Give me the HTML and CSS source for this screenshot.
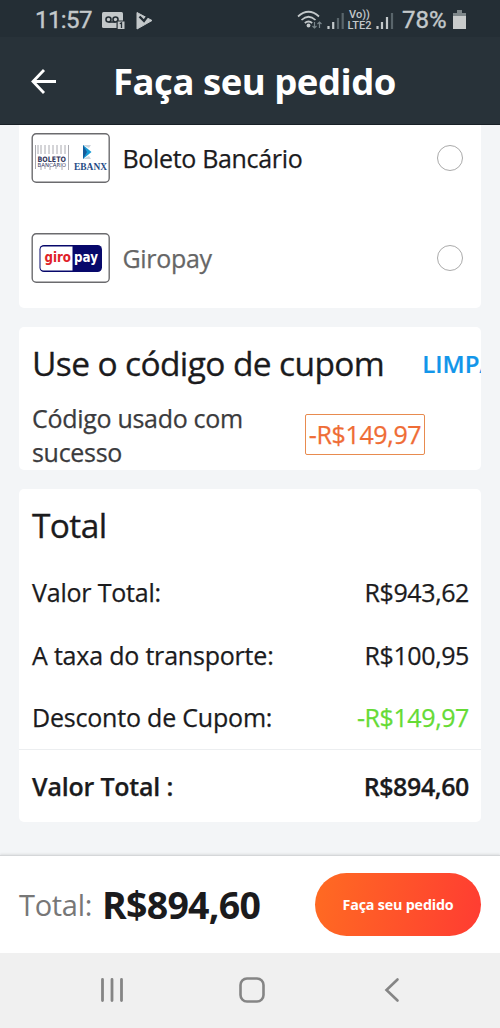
FILE: index.html
```html
<!DOCTYPE html>
<html lang="pt-BR">
<head>
<meta charset="utf-8">
<title>Faça seu pedido</title>
<link rel="stylesheet" href="styles.css">
</head>
<body>
<div class="screen">
  <div class="status">
    <span class="clock">11:57</span>
    <svg class="status-left" width="54" height="22" viewBox="0 0 54 22" fill="#c3c8ca">
      <rect x="0" y="3" width="21" height="16" rx="1.5"/>
      <g fill="none" stroke="#242e35" stroke-width="1.6"><circle cx="6.500" cy="10.500" r="2.500"/><circle cx="13.500" cy="10.500" r="2.500"/><path d="M6.500 13h7"/></g>
      <path d="M14.500 11.500h6.500v8h-6.500z" fill="#242e35"/><rect x="15.700" y="12.500" width="6.800" height="7.500"/>
      <path d="M17.800 14.800l1.700-.9v5" fill="none" stroke="#242e35" stroke-width="1.300"/>
      <path d="M35 3.500L50 11.500 35 20z" stroke="#c3c8ca" stroke-linejoin="round"/>
      <path d="M37.500 7.500l4.500 4.500 6.500-9" fill="none" stroke="#242e35" stroke-width="2.400"/>
    </svg>
    <div class="status-right">
      <svg width="48" height="22" viewBox="0 0 48 22">
        <g transform="translate(3 0)"><g fill="none" stroke="#c3c8ca" stroke-width="1.700"><path d="M0 7.500Q10.500-2 21 7.500M3.500 11Q10.500 4.500 17.500 11M6.800 14Q10.500 11 14.200 14"/></g>
        <circle cx="10.500" cy="16.500" r="1.900" fill="#c3c8ca"/>
        <path d="M16.500 13v6m-2-2l2 2 2-2M21.500 19v-6m-2 2l2-2 2 2" fill="none" stroke="#79858a" stroke-width="1.200"/></g>
        <path d="M33.500 17v3M38.200 13v7" stroke="#c3c8ca" stroke-width="2.200"/><path d="M43 9v11M47.700 4v16" stroke="#59656b" stroke-width="2.200"/>
      </svg>
      <span class="lte"><span>Vo))</span><span>LTE2</span></span>
      <svg width="18" height="22" viewBox="0 0 18 22"><path d="M1.500 17v3M6 13v7M11 8v12" stroke="#c3c8ca" stroke-width="2.200"/><path d="M16 4v16" stroke="#59656b" stroke-width="2.200"/></svg>
      <span class="percent">78%</span>
      <svg class="battery" width="13" height="20" viewBox="0 0 13 20"><path d="M4 0h5v3h4v4H0V3h4z" fill="#7e878a"/><path d="M0 6h13v13H0z" fill="#c9cccc"/></svg>
    </div>
  </div>
  <header class="header">
    <svg width="28" height="28" viewBox="0 0 28 28" fill="none" stroke="#fff" stroke-width="2.800"><path d="M14 3L3 14.500l11 11.500M3 14.500h23"/></svg>
    <h1 class="title">Faça seu pedido</h1>
  </header>
  <main class="content">
    <section class="card methods">
      <div class="method">
        <svg class="logo" width="80" height="52" viewBox="0 0 80 52">
          <rect x="1.200" y="1.800" width="77" height="48.500" rx="4" fill="#fff" stroke="#6b6b6e" stroke-width="1.400"/>
          <path d="M4.500 13v24M7 13v9M10 13v9M14 13v9M18 13v9M22 13v9M26 13v9M30 13v9M34 13v9M37.500 13v25M10 35v3M14 35v2M19 35v3M25 35v2M31 35v3" stroke="#aaaab0"/>
          <text class="boleto" x="6.500" y="29.500" textLength="28.500" lengthAdjust="spacingAndGlyphs">BOLETO</text><text class="bancario" x="6.500" y="35" textLength="28.500" lengthAdjust="spacingAndGlyphs">BANCÁRIO</text>
          <path d="M52 13h8l-2 3zM52 27h8l-2-3z" fill="#ccd4dc"/><path d="M52 13l8.500 7-8.500 7z" fill="#169bd5"/><path d="M52 13l4 7-4 7z" fill="#155a9a"/>
          <text class="ebanx" x="43" y="38" textLength="33" lengthAdjust="spacingAndGlyphs">EBANX</text>
        </svg>
        <span class="method-name">Boleto Bancário</span><i class="radio"></i>
      </div>
      <div class="method muted">
        <svg class="logo" width="80" height="52" viewBox="0 0 80 52">
          <rect x="1.200" y="1.800" width="77" height="48.500" rx="4" fill="#fff" stroke="#6b6b6e" stroke-width="1.400"/>
          <rect x="8.500" y="13" width="62.500" height="27" rx="4.500" fill="#07086b"/><path d="M41.500 14.500H12.500q-3 0-3 3v18q0 3 3 3h29z" fill="#fff"/>
          <text class="giro" x="13.500" y="30" fill="#e02228" textLength="26.500" lengthAdjust="spacingAndGlyphs">giro</text><text class="giro" x="43" y="30" fill="#fff" textLength="24" lengthAdjust="spacingAndGlyphs">pay</text>
        </svg>
        <span class="method-name">Giropay</span><i class="radio"></i>
      </div>
    </section>
    <section class="card coupon">
      <div class="coupon-head"><h2 class="heading">Use o código de cupom</h2><span class="clear">LIMPAR</span></div>
      <div class="coupon-body"><p class="coupon-text">Código usado com sucesso</p><span class="discount">-R$149,97</span></div>
    </section>
    <section class="card totals">
      <h2 class="heading">Total</h2>
      <div class="row"><span>Valor Total:</span><span class="amount">R$943,62</span></div>
      <div class="row"><span>A taxa do transporte:</span><span class="amount">R$100,95</span></div>
      <div class="row"><span>Desconto de Cupom:</span><span class="amount green">-R$149,97</span></div>
      <div class="row grand"><span>Valor Total :</span><span class="amount">R$894,60</span></div>
    </section>
  </main>
  <footer class="checkout">
    <span class="total-label">Total:</span><strong class="total-value">R$894,60</strong><button class="submit">Faça seu pedido</button>
  </footer>
  <nav class="nav">
    <svg width="24" height="26" viewBox="0 0 24 26" stroke="#858585" stroke-width="2.800" stroke-linecap="round"><path d="M2.500 2.500v21M12 2.500v21M21.500 2.500v21"/></svg>
    <svg width="26" height="26" viewBox="0 0 26 26" fill="none" stroke="#858585" stroke-width="2.600"><rect x="1.500" y="1.500" width="23" height="23" rx="6.500"/></svg>
    <svg width="16" height="26" viewBox="0 0 16 26" fill="none" stroke="#858585" stroke-width="2.600" stroke-linecap="round"><path d="M13.500 2.500L2.500 13l11 10.500"/></svg>
  </nav>
</div>
</body>
</html>
```
FILE: styles.css
```css
* { box-sizing: border-box; }
body { margin: 0; font-family: "Open Sans", "Noto Sans", sans-serif; color: #1b1b1d; }
h1, h2, p { margin: 0; }
svg { display: block; flex: none; overflow: visible; }
span, strong, h1, h2 { white-space: nowrap; }
.screen { width: 500px; height: 1028px; display: flex; flex-direction: column; background: #f3f5f7; overflow: hidden; }
.status { height: 37px; flex: none; display: flex; align-items: center; background: #242e35; color: #c3c8ca; padding: 2px 34px 0 35px; }
.clock { font-family: Roboto, sans-serif; font-size: 24px; font-weight: 400; line-height: 34px; width: 67px; letter-spacing: -0.6px; -webkit-text-stroke: 0.4px; }
.status-right { margin-left: auto; display: flex; align-items: center; }
.lte { display: flex; flex-direction: column; align-items: center; font: 500 11px/11px Roboto, sans-serif; margin: 0 4px 0 4px; width: 25px; }
.percent { font: 400 24px/34px Roboto, sans-serif; margin-left: 8px; width: 51px; letter-spacing: 0; -webkit-text-stroke: 0.4px; }
.header { height: 88px; flex: none; display: flex; align-items: center; background: #283239; color: #fff; padding-left: 30px; border-bottom: 1px solid #182026; }
.title { font-size: 36.500px; line-height: 50px; font-weight: 700; letter-spacing: -0.48px; margin-left: 55px; }
.content { height: 730px; flex: none; padding: 0 19px; display: flex; flex-direction: column; gap: 19px; }
.card { background: #fff; border-radius: 5px; flex: none; overflow: hidden; }
.methods { height: 183px; padding: 7px 18px 0 12px; border-radius: 0 0 5px 5px; }
.method { height: 52px; margin-bottom: 48px; display: flex; align-items: center; }
.method-name { font-size: 25px; line-height: 34px; margin-left: 11.500px; letter-spacing: -0.33px; -webkit-text-stroke: 0.25px; }
.muted .method-name { color: #666; }
.radio { width: 26px; height: 26px; border: 1.500px solid #aaa; border-radius: 50%; margin-left: auto; }
.boleto { font: 700 7.500px "DejaVu Sans", sans-serif; fill: #34375d; }
.bancario { font: 5.500px "DejaVu Sans", sans-serif; fill: #34375d; }
.ebanx { font: 700 11px "Liberation Serif", serif; fill: #244a85; }
.giro { font: 700 14px "DejaVu Sans", sans-serif; }
.coupon { height: 143px; padding: 11px 0 0 13px; }
.coupon-head { height: 50px; display: flex; align-items: center; }
.heading { font-size: 33.500px; line-height: 48px; font-weight: 400; letter-spacing: -0.62px; -webkit-text-stroke: 0.3px; }
.clear { font-size: 24px; font-weight: 600; color: #1296ea; margin-left: 38px; -webkit-text-stroke: 0.2px; }
.coupon-body { display: flex; align-items: flex-start; margin-top: 13px; }
.coupon-text { font-size: 25px; line-height: 34px; width: 273px; color: #3b3b3d; letter-spacing: -0.3px; -webkit-text-stroke: 0.25px; }
.discount { height: 41px; width: 120px; border: 1.500px solid #e88b4f; border-radius: 2px; margin-top: 13px; font-size: 25px; line-height: 38px; text-align: center; color: #ef6c35; letter-spacing: -0.35px; -webkit-text-stroke: 0.25px; }
.totals { height: 333px; padding-top: 12px; }
.totals .heading { padding-left: 13px; height: 60px; }
.row { display: flex; justify-content: space-between; align-items: center; height: 62.500px; padding: 0 12px 0 13px; font-size: 25px; line-height: 34px; letter-spacing: -0.2px; -webkit-text-stroke: 0.25px; }
.amount { letter-spacing: -0.4px; }
.green { color: #65db35; }
.grand { height: 73px; border-top: 1px solid #eceef0; font-weight: 600; }
.checkout { height: 98px; flex: none; display: flex; align-items: center; background: #fff; padding: 0 19px; border-top: 1px solid #d5d7d9; box-shadow: 0 -1px 2px #dddfe1; }
.total-label { font-size: 29px; color: #777; width: 83px; letter-spacing: -0.3px; }
.total-value { font-size: 37.500px; font-weight: 700; letter-spacing: -0.75px; }
.submit { margin-left: auto; width: 166px; height: 63px; padding: 0; border: 0; border-radius: 32px; background: linear-gradient(100deg, #ff6b22, #ff3c32); color: #fff; font: 700 14.300px "Open Sans", sans-serif; letter-spacing: -0.18px; }
.nav { height: 75px; flex: none; display: flex; align-items: center; background: #f0f0f0; padding: 0 100px 2px 100px; }
.nav svg:nth-child(2) { margin-left: 115px; }
.nav svg:nth-child(3) { margin-left: 119px; }
```
